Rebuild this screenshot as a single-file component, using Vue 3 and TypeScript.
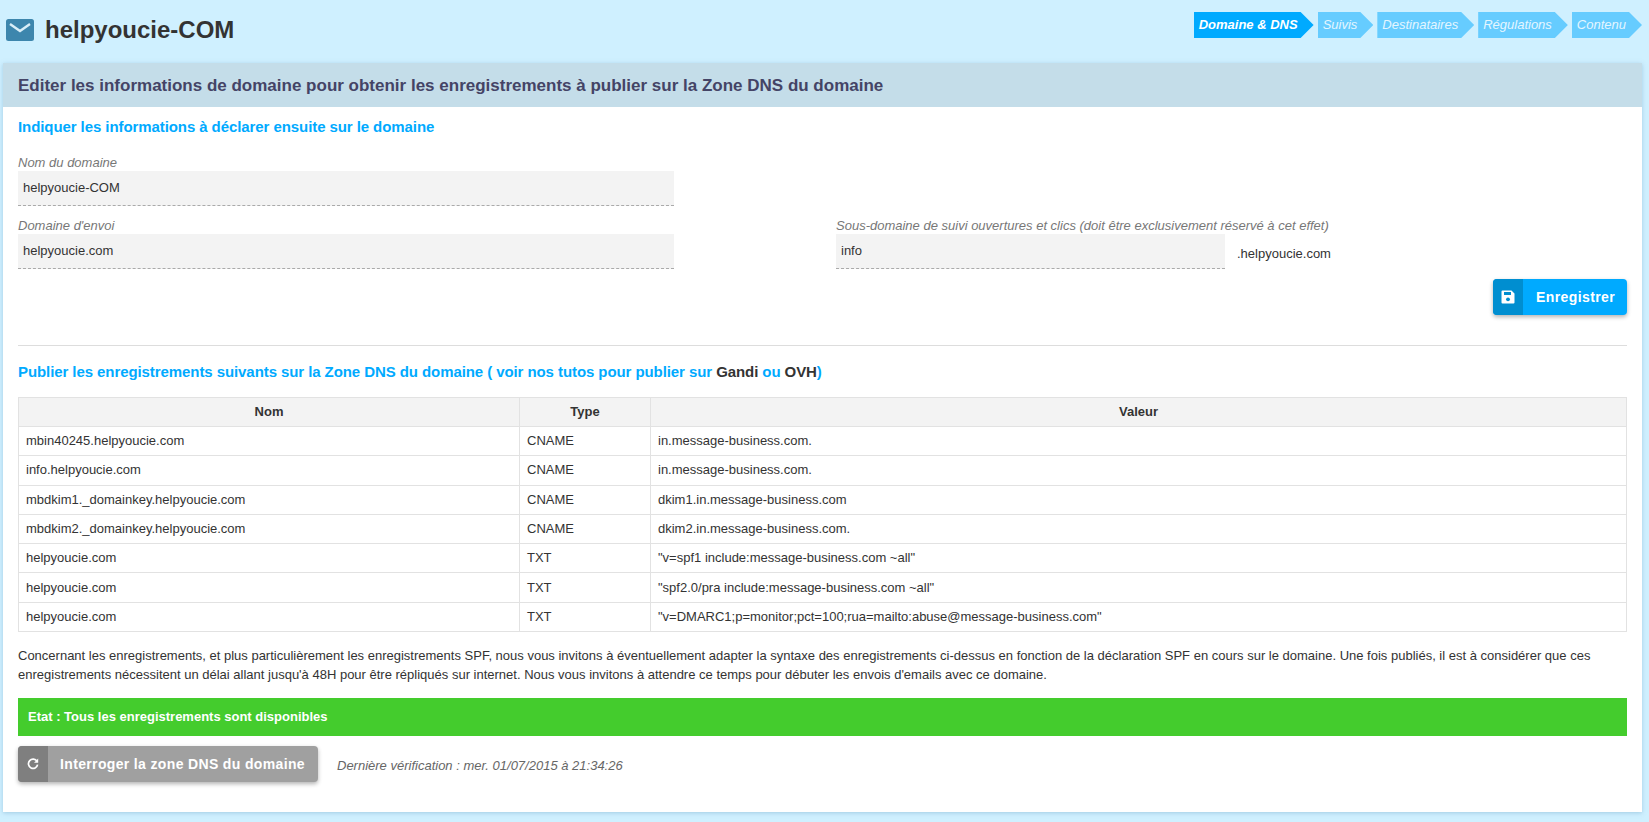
<template>
  <div class="page">
    <header class="top-bar">
      <div class="brand">
        <svg class="mail-icon" width="28" height="22" viewBox="0 0 28 22">
          <rect width="28" height="22" rx="2.5" fill="#3d86ad" />
          <path d="M4 5 L14 12 L24 5" fill="none" stroke="#d9eef8" stroke-width="2.4" />
        </svg>
        <h1>helpyoucie-COM</h1>
      </div>
      <nav class="steps">
        <span v-for="(step, i) in steps" :key="step" class="step" :class="{ active: i === 0 }">{{ step }}</span>
      </nav>
    </header>

    <main class="panel">
      <h2 class="panel-title">Editer les informations de domaine pour obtenir les enregistrements à publier sur la Zone DNS du domaine</h2>
      <div class="panel-body">
        <h3 class="section-title first">Indiquer les informations à déclarer ensuite sur le domaine</h3>

        <div class="field name-field">
          <label>Nom du domaine</label>
          <div class="input">helpyoucie-COM</div>
        </div>

        <div class="form-row">
          <div class="field send-field">
            <label>Domaine d'envoi</label>
            <div class="input">helpyoucie.com</div>
          </div>
          <div class="field track-field">
            <label>Sous-domaine de suivi ouvertures et clics (doit être exclusivement réservé à cet effet)</label>
            <div class="track-line">
              <div class="input track-input">info</div>
              <span class="suffix">.helpyoucie.com</span>
            </div>
          </div>
        </div>

        <div class="save-row">
          <button class="btn btn-blue">
            <span class="btn-icon">
              <svg width="14" height="14" viewBox="0 0 14 14">
                <path d="M1.5 0.5 H10.5 L13.5 3.5 V12.5 A1 1 0 0 1 12.5 13.5 H1.5 A1 1 0 0 1 0.5 12.5 V1.5 A1 1 0 0 1 1.5 0.5 Z" fill="#fff" />
                <rect x="3" y="2" width="7" height="3" fill="#008ed0" />
                <circle cx="7" cy="9.3" r="1.9" fill="#008ed0" />
              </svg>
            </span>
            <span class="btn-label">Enregistrer</span>
          </button>
        </div>

        <hr class="divider" />

        <h3 class="section-title">
          Publier les enregistrements suivants sur la Zone DNS du domaine ( voir nos tutos pour publier sur
          <a class="dark">Gandi</a> ou <a class="dark">OVH</a>)
        </h3>

        <table class="records">
          <colgroup>
            <col class="col-name" />
            <col class="col-type" />
            <col />
          </colgroup>
          <thead>
            <tr>
              <th>Nom</th>
              <th>Type</th>
              <th>Valeur</th>
            </tr>
          </thead>
          <tbody>
            <tr v-for="(r, i) in records" :key="i">
              <td>{{ r.name }}</td>
              <td>{{ r.type }}</td>
              <td>{{ r.value }}</td>
            </tr>
          </tbody>
        </table>

        <p class="note">
          Concernant les enregistrements, et plus particulièrement les enregistrements SPF, nous vous invitons à éventuellement adapter la syntaxe des enregistrements ci-dessus en fonction de la déclaration SPF en cours sur le domaine. Une fois publiés, il est à considérer que ces enregistrements nécessitent un délai allant jusqu'à 48H pour être répliqués sur internet. Nous vous invitons à attendre ce temps pour débuter les envois d'emails avec ce domaine.
        </p>

        <div class="status">Etat : Tous les enregistrements sont disponibles</div>

        <div class="check-row">
          <button class="btn btn-grey">
            <span class="btn-icon">
              <svg width="12" height="12" viewBox="0 0 12 12">
                <path d="M10 3.4 A4.6 4.6 0 1 0 10.6 6.6" fill="none" stroke="#fff" stroke-width="1.7" />
                <path d="M11.2 0.6 V4.8 H7 Z" fill="#fff" />
              </svg>
            </span>
            <span class="btn-label">Interroger la zone DNS du domaine</span>
          </button>
          <span class="last-check">Dernière vérification : mer. 01/07/2015 à 21:34:26</span>
        </div>
      </div>
    </main>
  </div>
</template>

<script setup lang="ts">
interface DnsRecord {
  name: string;
  type: string;
  value: string;
}

const steps: string[] = ['Domaine & DNS', 'Suivis', 'Destinataires', 'Régulations', 'Contenu'];

const records: DnsRecord[] = [
  { name: 'mbin40245.helpyoucie.com', type: 'CNAME', value: 'in.message-business.com.' },
  { name: 'info.helpyoucie.com', type: 'CNAME', value: 'in.message-business.com.' },
  { name: 'mbdkim1._domainkey.helpyoucie.com', type: 'CNAME', value: 'dkim1.in.message-business.com' },
  { name: 'mbdkim2._domainkey.helpyoucie.com', type: 'CNAME', value: 'dkim2.in.message-business.com.' },
  { name: 'helpyoucie.com', type: 'TXT', value: '"v=spf1 include:message-business.com ~all"' },
  { name: 'helpyoucie.com', type: 'TXT', value: '"spf2.0/pra include:message-business.com ~all"' },
  { name: 'helpyoucie.com', type: 'TXT', value: '"v=DMARC1;p=monitor;pct=100;rua=mailto:abuse@message-business.com"' },
];
</script>

<style>
html,
body {
  background: #cff0ff;
}
</style>

<style scoped>
.page {
  height: 822px;
  box-sizing: border-box;
  padding: 0 7px 0 3px;
  font-family: "Liberation Sans", Arial, sans-serif;
  font-size: 13px;
  color: #333;
  background: #cff0ff;
  overflow: hidden;
}

.top-bar {
  height: 63px;
  display: flex;
  justify-content: space-between;
  align-items: flex-start;
}

.brand {
  display: flex;
  align-items: center;
  gap: 11px;
  padding: 18px 0 0 3px;
}

.brand h1 {
  margin: 0;
  font-size: 24px;
  line-height: 24px;
  font-weight: 700;
  color: #333;
}

.steps {
  display: flex;
  gap: 4px;
  padding-top: 12px;
}

.step {
  height: 26px;
  line-height: 26px;
  padding: 0 16px 0 5px;
  background: #66ccff;
  color: #e4f6ff;
  font-style: italic;
  font-size: 13px;
  clip-path: polygon(0 0, calc(100% - 13px) 0, 100% 50%, calc(100% - 13px) 100%, 0 100%);
}

.step.active {
  background: #00aaff;
  color: #fff;
  font-weight: 700;
}

.panel {
  background: #fff;
  height: 749px;
  box-shadow: 0 1px 4px rgba(120, 170, 200, 0.5);
}

.panel-title {
  margin: 0;
  height: 44px;
  line-height: 45px;
  padding-left: 15px;
  font-size: 17px;
  font-weight: 700;
  color: #444466;
  background: #c4dde9;
}

.panel-body {
  padding: 0 15px;
}

.section-title {
  margin: 0;
  font-size: 15px;
  line-height: 20px;
  font-weight: 700;
  letter-spacing: -0.08px;
  color: #00aaff;
}

.section-title.first {
  padding-top: 10px;
}

.dark {
  color: #333;
}

.field label {
  display: block;
  font-style: italic;
  color: #777;
  line-height: 16px;
}

.name-field {
  margin-top: 18px;
  width: 656px;
}

.input {
  height: 34px;
  line-height: 34px;
  padding-left: 5px;
  background: #f3f3f3;
  border-bottom: 1px dashed #aaa;
}

.form-row {
  display: flex;
  margin-top: 12px;
}

.send-field {
  width: 656px;
  flex-shrink: 0;
}

.track-field {
  margin-left: 162px;
}

.track-line {
  display: flex;
  align-items: center;
  gap: 12px;
}

.track-input {
  width: 384px;
}

.suffix {
  padding-top: 3px;
}

.save-row {
  display: flex;
  justify-content: flex-end;
  margin-top: 10px;
}

.btn {
  display: flex;
  align-items: stretch;
  height: 36px;
  padding: 0;
  border: 0;
  border-radius: 4px;
  overflow: hidden;
  font-family: inherit;
  font-weight: 700;
  font-size: 14px;
  color: #fff;
  box-shadow: 0 2px 4px rgba(0, 0, 0, 0.3);
}

.btn-icon {
  width: 30px;
  display: flex;
  align-items: center;
  justify-content: center;
}

.btn-label {
  display: flex;
  align-items: center;
}

.btn-blue {
  width: 134px;
  background: #00aaff;
}

.btn-blue .btn-icon {
  background: #008ed0;
}

.btn-blue .btn-label {
  padding-left: 13px;
  letter-spacing: 0.4px;
}

.btn-grey {
  width: 300px;
  background: #a0a0a0;
}

.btn-grey .btn-icon {
  background: #7f7f7f;
}

.btn-grey .btn-label {
  padding-left: 12px;
  letter-spacing: 0.35px;
}

.divider {
  margin: 30px 0 0;
  border: 0;
  border-top: 1px solid #ddd;
}

.divider + .section-title {
  margin-top: 16px;
}

.records {
  width: 100%;
  margin-top: 15px;
  border-collapse: collapse;
  table-layout: fixed;
}

.col-name {
  width: 501px;
}

.col-type {
  width: 131px;
}

.records th,
.records td {
  border: 1px solid #e2e2e2;
  padding: 0 7px;
  height: 28.3px;
  line-height: 16px;
  text-align: left;
  font-weight: 400;
}

.records th {
  height: 28px;
  background: #f3f3f3;
  font-weight: 700;
  text-align: center;
}

.note {
  margin: 14px 0 0;
  line-height: 19px;
}

.status {
  margin-top: 14px;
  height: 38px;
  line-height: 38px;
  padding-left: 10px;
  background: #44cc2d;
  color: #fff;
  font-weight: 700;
}

.check-row {
  display: flex;
  align-items: center;
  gap: 19px;
  margin-top: 10px;
}

.last-check {
  font-style: italic;
  color: #666;
  padding-top: 3px;
}
</style>
